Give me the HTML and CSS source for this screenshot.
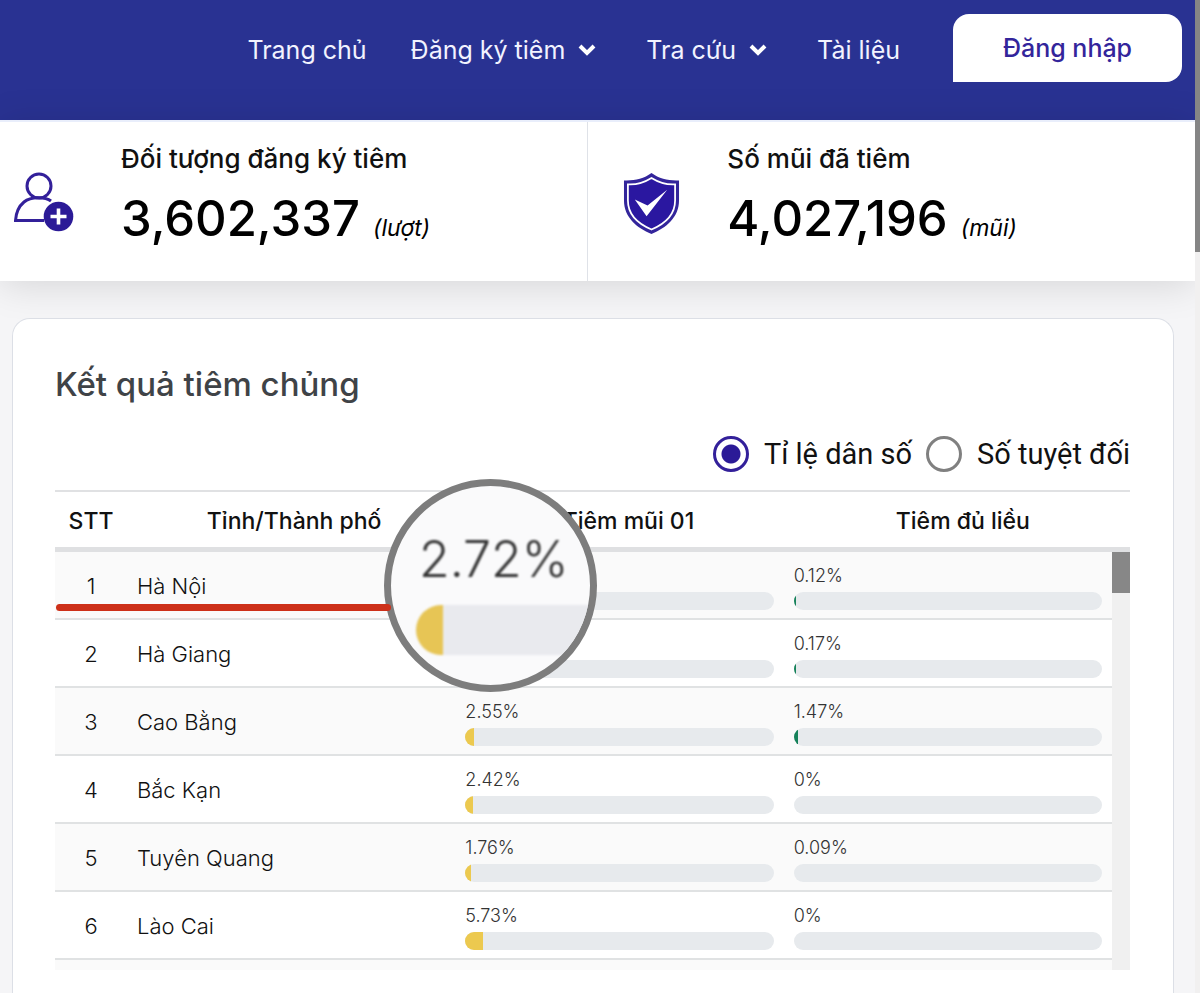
FILE: index.html
```html
<!DOCTYPE html>
<html lang="vi">
<head>
<meta charset="utf-8">
<meta name="viewport" content="width=device-width, initial-scale=1">
<title>Kết quả tiêm chủng</title>
<link rel="stylesheet" href="styles.css">
</head>
<body>
<div class="shell">
  <div class="page">
    <header class="topbar">
      <nav class="nav">
        <a class="nav-link" href="#">Trang chủ</a>
        <a class="nav-link" href="#">Đăng ký tiêm
          <svg class="chevron" viewBox="0 0 18 14" aria-hidden="true"><path d="M2 3l7 7 7-7"/></svg></a>
        <a class="nav-link nav-link-mid" href="#">Tra cứu
          <svg class="chevron" viewBox="0 0 18 14" aria-hidden="true"><path d="M2 3l7 7 7-7"/></svg></a>
        <a class="nav-link nav-link-mid" href="#">Tài liệu</a>
      </nav>
      <button class="login" type="button">Đăng nhập</button>
    </header>

    <section class="stats">
      <div class="stat stat-people">
        <svg class="stat-icon" viewBox="0 0 60 60" aria-hidden="true">
          <circle cx="25" cy="14" r="12" fill="none" stroke="#33209a" stroke-width="3"/>
          <path d="M37 29C32 25 17 24 10 30C4 35 2 41 1.500 48.500H30" fill="none" stroke="#33209a" stroke-width="3"/>
          <circle cx="44.500" cy="44.500" r="14.800" fill="#2b1a97"/>
          <path d="M44.500 36.500v16M36.500 44.500h16" stroke="#fff" stroke-width="3.600"/>
        </svg>
        <div>
          <div class="stat-label">Đối tượng đăng ký tiêm</div>
          <div class="stat-value">3,602,337 <em class="stat-unit">(lượt)</em></div>
        </div>
      </div>
      <div class="stat stat-doses">
        <svg class="stat-icon" viewBox="0 0 58 64" aria-hidden="true">
          <path d="M29 1C37 7 47 9 57 8.500V29C57 46 44 57 29 63C14 57 1 46 1 29V8.500C11 9 21 7 29 1Z" fill="#33259b"/>
          <path d="M29 6C37 11 45 13 53 12.500V29C53 44 42 53 29 58.500C16 53 5 44 5 29V12.500C13 13 21 11 29 6Z" fill="#2a17a0" stroke="#fff" stroke-width="1.800"/>
          <path d="M12 28L24 45L45 18L25 34Z" fill="#fff"/>
        </svg>
        <div>
          <div class="stat-label">Số mũi đã tiêm</div>
          <div class="stat-value">4,027,196 <em class="stat-unit">(mũi)</em></div>
        </div>
      </div>
    </section>

    <main class="card">
      <h1 class="card-title">Kết quả tiêm chủng</h1>
      <div class="modes" role="radiogroup" aria-label="Cách hiển thị">
        <label class="mode"><input class="radio" type="radio" name="mode" checked>Tỉ lệ dân số</label>
        <label class="mode"><input class="radio" type="radio" name="mode">Số tuyệt đối</label>
      </div>

      <div class="board">
        <table class="results">
          <thead>
            <tr><th class="col-index">STT</th><th>Tỉnh/Thành phố</th><th>Tiêm mũi 01</th><th>Tiêm đủ liều</th></tr>
          </thead>
          <tbody>
            <tr><td class="col-index">1</td><td>Hà Nội</td>
              <td class="rate">&nbsp;<div class="bar"></div></td>
              <td class="rate">0.12%<div class="bar"><div class="fill full" style="width:0.7%"></div></div></td>
              <td class="track" rowspan="7"><div class="thumb"></div></td></tr>
            <tr><td class="col-index">2</td><td>Hà Giang</td>
              <td class="rate">&nbsp;<div class="bar"></div></td>
              <td class="rate">0.17%<div class="bar"><div class="fill full" style="width:0.7%"></div></div></td></tr>
            <tr><td class="col-index">3</td><td>Cao Bằng</td>
              <td class="rate">2.55%<div class="bar"><div class="fill first" style="width:2.9%"></div></div></td>
              <td class="rate">1.47%<div class="bar"><div class="fill full" style="width:1.47%"></div></div></td></tr>
            <tr><td class="col-index">4</td><td>Bắc Kạn</td>
              <td class="rate">2.42%<div class="bar"><div class="fill first" style="width:2.42%"></div></div></td>
              <td class="rate">0%<div class="bar"></div></td></tr>
            <tr><td class="col-index">5</td><td>Tuyên Quang</td>
              <td class="rate">1.76%<div class="bar"><div class="fill first" style="width:1.76%"></div></div></td>
              <td class="rate">0.09%<div class="bar"></div></td></tr>
            <tr><td class="col-index">6</td><td>Lào Cai</td>
              <td class="rate">5.73%<div class="bar"><div class="fill first" style="width:5.73%"></div></div></td>
              <td class="rate">0%<div class="bar"></div></td></tr>
            <tr class="cut"><td class="col-index"></td><td></td><td></td><td></td></tr>
          </tbody>
        </table>
        <div class="lens">
          <div class="lens-view">
            <div class="lens-text">2.72%</div>
            <div class="lens-bar"><div class="lens-fill"></div></div>
          </div>
        </div>
        <div class="underline"></div>
      </div>
    </main>
  </div>
  <div class="page-scroll"><div class="page-thumb"></div></div>
</div>
</body>
</html>
```
FILE: styles.css
```css
* { box-sizing: border-box; }

body {
  margin: 0;
  font-family: Inter, "Liberation Sans", sans-serif;
  color: #111;
  background: #f5f5f7;
}

.shell { display: flex; min-height: 100vh; }
.page { flex: 1; display: flex; flex-direction: column; min-width: 0; }

.page-scroll { width: 5px; background: #f1f0f0; }
.page-thumb { height: 252px; background: #858585; }

/* Top bar */
.topbar {
  display: flex;
  align-items: flex-start;
  justify-content: flex-end;
  gap: 53px;
  min-height: 120px;
  padding: 14px 13px 0 0;
  background: #293292;
}
.nav { display: flex; gap: 44px; padding-top: 19px; }
.nav-link {
  display: flex;
  align-items: center;
  gap: 13px;
  font-size: 25px;
  line-height: 34px;
  color: #f2f3ff;
  text-decoration: none;
  white-space: nowrap;
}
.nav-link-mid { margin-left: 6px; }
.chevron { width: 18px; height: 14px; fill: none; stroke: #fff; stroke-width: 4; }
.login {
  width: 229px;
  height: 68px;
  border: 0;
  border-radius: 16px 16px 16px 0;
  background: #fff;
  color: #33259b;
  font: 500 25px/34px Inter, "Liberation Sans", sans-serif;
}

/* Totals */
.stats {
  display: grid;
  grid-template-columns: 29fr 30fr;
  background: #fff;
  border-top: 2px solid #e9eefb;
  box-shadow: 0 4px 36px rgba(0, 0, 0, 0.13);
}
.stat { display: flex; gap: 47px; padding: 20px 0 24px 14px; }
.stat-doses { border-left: 1px solid #dfe2e8; padding-left: 35px; }
.stat-icon { width: 60px; height: 60px; margin-top: 30px; flex: none; }
.stat-doses .stat-icon { width: 57px; height: 63px; }
.stat-label { font-size: 26px; font-weight: 500; line-height: 34px; }
.stat-value { font-size: 49px; font-weight: 500; line-height: 58px; margin-top: 14px; white-space: nowrap; color: #000; }
.stat-unit { font-size: 23px; font-weight: 400; }

/* Results card */
.card {
  flex: 1;
  margin: 37px 21px 0 12px;
  padding: 42px 43px 22px 42px;
  border: 1px solid #dcdfe6;
  border-bottom: 0;
  border-radius: 18px 18px 0 0;
  background: #fff;
}
.card-title { margin: 0; font-size: 33px; font-weight: 500; line-height: 46px; color: #3f4347; }
.modes {
  display: flex;
  justify-content: flex-end;
  gap: 14px;
  margin: 27px 0 16px;
  font-family: Roboto, sans-serif;
  font-size: 29px;
  line-height: 40px;
}
.mode { display: flex; align-items: center; gap: 15px; }
.radio {
  appearance: none;
  width: 36px;
  height: 36px;
  margin: 0;
  border: 3px solid #808080;
  border-radius: 50%;
}
.radio:checked {
  border-color: #33209a;
  background: radial-gradient(circle, #2b1a97 9px, transparent 10px);
}

.board { position: relative; }
.results { display: block; }
.results thead, .results tbody {
  display: table;
  width: 100%;
  table-layout: fixed;
  border-collapse: separate;
  border-spacing: 0;
}
.results th {
  height: 62px;
  padding: 2px 0 0;
  border-top: 2px solid #e0e1e3;
  border-bottom: 5px solid #dfe0e2;
  font-size: 23px;
  font-weight: 500;
  line-height: 30px;
}
.results td {
  padding: 2px 10px 0;
  border-bottom: 2px solid #e0e2e3;
  font-size: 22px;
  font-weight: 300;
  line-height: 30px;
}
.results tr:nth-child(odd) td { background: #fafafa; }
.results .col-index { width: 72px; text-align: center; }
.results .rate { padding: 14px 10px 8px; font-size: 18px; line-height: 20px; color: #333; }
.results .cut td { height: 10px; padding: 0; border: 0; }
.results tbody tr .track { width: 18px; padding: 0; border: 0; vertical-align: top; background: #f0f0f0; }
.thumb { height: 41px; background: #878787; }

.bar { height: 18px; margin-top: 6px; border-radius: 9px; overflow: hidden; background: #e7eaed; }
.fill { height: 100%; }
.first { background: #ecc94f; }
.full { background: #16825a; }

/* Magnifier laid over the table */
.lens {
  position: absolute;
  left: 329px;
  top: -11px;
  width: 213px;
  height: 213px;
  border: 7px solid #7d7d7d;
  border-radius: 50%;
  overflow: hidden;
  background: #fafafb;
}
.lens-view { padding: 43px 0 0 25px; filter: blur(1px); }
.lens-text { font-size: 50px; font-weight: 300; line-height: 60px; color: #333; padding-left: 3px; }
.lens-bar { height: 50px; margin-top: 16px; border-radius: 25px 0 0 25px; overflow: hidden; background: #e9eaee; }
.lens-fill { width: 27px; height: 100%; background: #e7c555; }
.underline {
  position: absolute;
  left: 1px;
  top: 114px;
  width: 335px;
  height: 7px;
  border-radius: 4px;
  background: #cd3019;
}
```
